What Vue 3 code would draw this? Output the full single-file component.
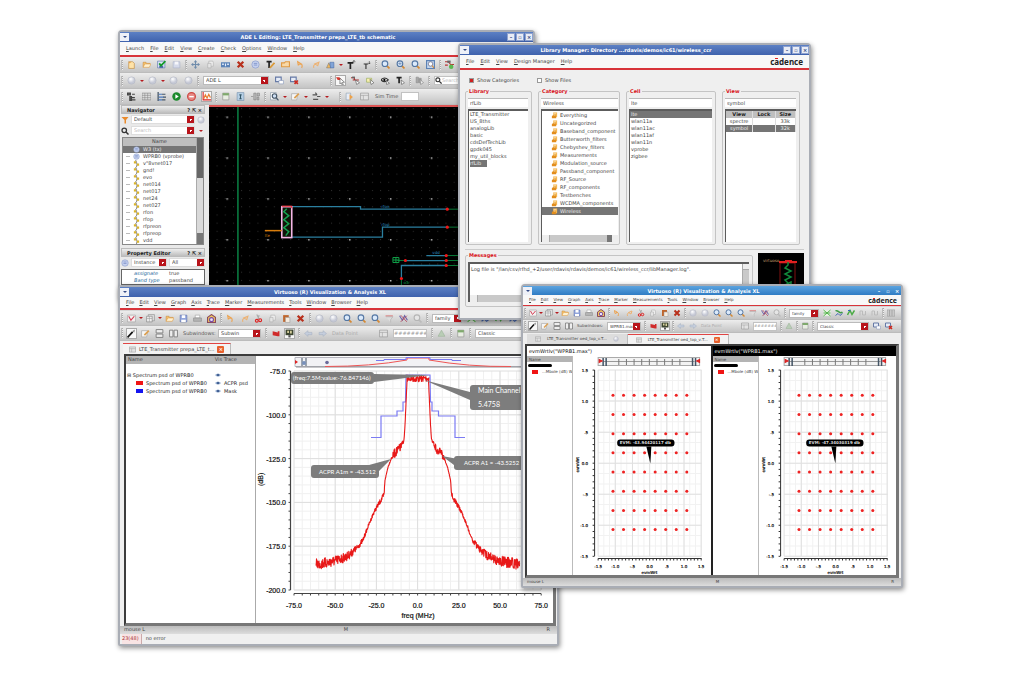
<script setup>
const sel = (value, w, extra = {}) => ({ k: 'select', value, w, ...extra })
const txt = (value, w, dim) => ({ k: 'text', value, w, dim })
const inp = (value, w, label, search) => ({ k: 'input', value, w, label, search })
const gap = (w) => ({ k: 'gap', w })
const icons = (s) => s.split(' ').map((n) => {
  if (n === '|') return { k: 'grip' }
  if (n === 'v') return { k: 'drop' }
  return { k: 'icon', name: n.replace('!', ''), on: n.endsWith('!') }
})

const visMenu = ['File', 'Edit', 'View', 'Graph', 'Axis', 'Trace', 'Marker', 'Measurements', 'Tools', 'Window', 'Browser', 'Help']
const visIcons = '| trace v sheet v open save print snap | undo redo cut copy paste x | ball ball zoom zoom zoom filter tracex zoomg |'

const windows = [
  {
    id: 'schematic',
    title: 'ADE L Editing: LTE_Transmitter prepa_LTE_tb schematic',
    menu: ['Launch', 'File', 'Edit', 'View', 'Create', 'Check', 'Options', 'Window', 'Help'],
    bars: [
      icons('| new open check saveg | move copy stretch x prop tpen label undo redo shape v tbig tsmall | zoom zoomin zoom fit | netplus'),
      [...icons('| ball v ball v ball ball |'), sel('ADE L', 66), ...icons('win winx'), gap(21), ...icons('| cursor! netcur selcur eyecur tcur | grpcur |'), inp('', 60, 'Search', true)],
      [...icons('| tree table align play stop chart! | page info probe | zoomdoc v edit v net v'), gap(2), ...icons('| page2 frame'), txt('Sim Time', 20), inp('', 18, 'Sim time')],
    ],
  },
  {
    id: 'visual',
    title: 'Virtuoso (R) Visualization & Analysis XL',
    menu: visMenu,
    bars: [
      [...icons(visIcons), sel('family', 30), ...icons('wave1 wave2 wave3 wave2')],
      [...icons('| wand! edit split cols'), txt('Subwindows:', 30), sel('Subwin', 43), ...icons('| flag photo! | back fwd'), txt('Data Point', 42, true), ...icons('frame'), inp('##########', 34, 'Data value'), ...icons('| tri | page |'), sel('Classic', 66)],
    ],
  },
  {
    id: 'library',
    title: 'Library Manager: Directory ...rdavis/demos/ic61/wireless_ccr',
    menu: ['File', 'Edit', 'View', 'Design Manager', 'Help'],
    logo: true,
    bars: [],
  },
  {
    id: 'constel',
    title: 'Virtuoso (R) Visualization & Analysis XL',
    menu: visMenu,
    logo: true,
    bars: [
      [...icons(visIcons), sel('family', 30), ...icons('wave1 wave2 wave3 ghost ghost | table')],
      [...icons('| wand! edit split cols'), txt('Subwindows:', 26), sel('WPRB1.max"', 34), ...icons('| flag photo! | back fwd'), txt('Data Point', 36, true), ...icons('frame'), inp('##########', 24, 'Data value'), ...icons('| tri | page |'), sel('Classic', 52), ...icons('win winx')],
    ],
  },
]

const nets = ['W3 (tx)', 'WPRB0 (vprobe)', 'v"8vnet017', 'gnd!', 'evo', 'net014', 'net017', 'net24', 'net027', 'rfon', 'rfop', 'rfpreon', 'rfpreop', 'vdd']
const libs = ['LTE_Transmitter', 'US_8ths', 'analogLib', 'basic', 'cdsDefTechLib', 'gpdk045', 'my_util_blocks', 'rfLib']
const cats = ['Everything', 'Uncategorized', 'Baseband_component', 'Butterworth_filters', 'Chebyshev_filters', 'Measurements', 'Modulation_source', 'Passband_component', 'RF_Source', 'RF_components', 'Testbenches', 'WCDMA_components', 'Wireless']
const cells = ['lte', 'wlan11a', 'wlan11ac', 'wlan11af', 'wlan11n', 'vprobe', 'zigbee']
const traces = [
  { name: 'ACPR psd', color: 'red' },
  { name: 'Mask', color: 'blue' },
]

/* spectrum trace: right half mirrored from the left around 0 MHz */
let seed = 7
const rnd = () => {
  seed = (seed * 16807) % 2147483647
  return seed / 2147483647 - 0.5
}
const half = [
  [316, 564, 11], [326, 563, 11], [338, 560, 10], [348, 556, 9], [357, 548, 6], [363, 540, 5], [369, 524, 3], [374, 512, 4],
  [384, 495, 6], [385, 480, 1], [388, 467, 1], [391, 459, 2], [394, 454, 9], [401, 447, 9], [404, 440, 2], [405, 425, 0], [407, 381, 0],
]
const side = () => {
  const out = []
  for (let i = 0; i < half.length - 1; i++) {
    const [x1, y1, n1] = half[i]
    const [x2, y2, n2] = half[i + 1]
    const steps = Math.max(2, Math.round((x2 - x1) * 4))
    for (let s = 0; s < steps; s++) {
      const t = s / steps
      out.push([x1 + (x2 - x1) * t, y1 + (y2 - y1) * t + rnd() * (n1 + (n2 - n1) * t)])
    }
  }
  out.push([407, 381])
  return out
}
const fmt = (pts) => pts.map(([x, y]) => x.toFixed(1) + ',' + y.toFixed(1)).join(' ')
const top = Array.from({ length: 74 }, (_, i) => [407 + i * 0.3, 378.5 + rnd() * 7])
const right = side().map(([x, y]) => [835.5 - x, y]).reverse()
const spectrum = fmt([...side(), ...top, ...right])
const mask = '371,437.5 381,437.5 381,416 397,416 397,411 403,411 403,402 405.5,402 406,375 430,375 430.5,402 432,402 432,411 438.5,411 438.5,416 455,416 455,437.5 465,437.5'
const dbTicks = [75, 100, 125, 150, 175, 200].map((v, i) => ({ t: '-' + v + '.0', y: 371 + i * 43.8 }))
const mhzTicks = ['-75.0', '-50.0', '-25.0', '0.0', '25.0', '50.0', '75.0'].map((t, i) => ({ t, x: 294 + i * 41.2 }))

const panes = [
  { title: 'evmWrtlv("WPRB1.max")', evm: 'EVM: -43.94420117 db', x: 617, tip: 649 },
  { title: 'evmWrtlv("WPRB1.max")', evm: 'EVM: -47.34030319 db', x: 620, tip: 648, dark: true },
]
const evmY = ['1.5', '1.0', '.5', '0.0', '-.5', '-1.0', '-1.5'].map((t, i) => ({ t, y: 371 + i * 30.9 }))
const evmX = ['-1.5', '-1.0', '-.5', '0.0', '.5', '1.0', '1.5'].map((t, i) => ({ t, x: 598 + i * 17.1 }))
</script>

<template>
  <main class="desk">
    <svg class="defs" aria-hidden="true">
      <defs>
        <radialGradient id="gBall" cx=".4" cy=".3"><stop offset="0" stop-color="#fff" /><stop offset="1" stop-color="#c6c9d6" /></radialGradient>
      </defs>
      <symbol id="new" viewBox="0 0 16 16"><path d="M3 3h7l3 3v9H3z" fill="#ffe3a8" stroke="#b98032" /><path d="M2 1l2 3 3-1-2 3" fill="#f08a24" /></symbol>
      <symbol id="open" viewBox="0 0 16 16"><path d="M2 13V4h5l1 2h6v3" fill="#f7c46c" stroke="#c78a3c" /><path d="M2 13l3-6h11l-3 6z" fill="#fff1d0" stroke="#dd9a44" /></symbol>
      <symbol id="save" viewBox="0 0 16 16"><path d="M2 2h12v12H2z" fill="#93a6dc" stroke="#5a6cac" /><path d="M5 2h6v5H5zM4 10h8v4H4z" fill="#fff" /></symbol>
      <symbol id="check" viewBox="0 0 16 16"><path d="M1 2h13v12H1z" fill="#dbe5f5" stroke="#4a65a5" /><path d="M4 10h7v4H4z" fill="#4a65a5" /><path d="M4 6l3 4 8-8" fill="none" stroke="#149a28" stroke-width="3" /></symbol>
      <symbol id="saveg" viewBox="0 0 16 16"><path d="M2 3h12v11H2z" fill="#d5daea" stroke="#a9b0c6" /><path d="M5 3h6v5H5z" fill="#f6f6fa" /></symbol>
      <symbol id="move" viewBox="0 0 16 16"><path d="M8 0l3 4H9v3h3V5l4 3-4 3V9H9v3h2l-3 4-3-4h2V9H4v2L0 8l4-3v2h3V4H5z" fill="#6f8cab" /></symbol>
      <symbol id="copy" viewBox="0 0 16 16"><path d="M5 2h7l1 2v7H5z" fill="#eee" stroke="#aaa" /><path d="M3 6h6v8H3z" fill="#e4e4e4" stroke="#aaa" /></symbol>
      <symbol id="stretch" viewBox="0 0 16 16"><path d="M0 4h16v9H0z" fill="#5b83b8" /><path d="M2 6h3v3H2zm5 0h2v5H7zm4 0h3v3h-3z" fill="#e4eefb" /></symbol>
      <symbol id="x" viewBox="0 0 16 16"><path d="M3 3l10 10M13 3L3 13" stroke="#b8301c" stroke-width="4" /></symbol>
      <symbol id="prop" viewBox="0 0 16 16"><circle cx="8" cy="8" r="6.500" fill="#c5d0ee" stroke="#7f92c6" /><path d="M5 6h6M5 9h6" stroke="#5872b6" /></symbol>
      <symbol id="tpen" viewBox="0 0 16 16"><path d="M1 3h9M5.500 3v11" stroke="#222" stroke-width="3" /><path d="M7 14l8-9" stroke="#d99a3a" stroke-width="3" /></symbol>
      <symbol id="label" viewBox="0 0 16 16"><path d="M1 5h5l2-2h7v9H1z" fill="#f8d9a8" stroke="#e09a44" stroke-width="2" /></symbol>
      <symbol id="undo" viewBox="0 0 16 16"><path d="M3 3l1 6 5-2zM6 6c5 0 6 4 4 8" fill="none" stroke="#eda24e" stroke-width="2" /></symbol>
      <symbol id="redo" viewBox="0 0 16 16"><path d="M14 4l-2 6-5-3zM9 7c-4 1-5 3-4 7" fill="none" stroke="#ecb273" stroke-width="2" /></symbol>
      <symbol id="shape" viewBox="0 0 16 16"><path d="M1 14l4-9 4 9z" fill="#f3b95d" stroke="#777" /><path d="M7 4h7v10H8z" fill="#80a4d8" stroke="#476ba5" /></symbol>
      <symbol id="tbig" viewBox="0 0 16 16"><path d="M1 5h10M6 5v11" stroke="#222" stroke-width="3" /><path d="M12 6V1m-2 2l2-2 3 2" fill="none" stroke="#222" /></symbol>
      <symbol id="tsmall" viewBox="0 0 16 16"><path d="M3 7h8M7 7v9" stroke="#333" stroke-width="2" /><path d="M13 2v5m-2-2l2 2 2-2" fill="none" stroke="#222" /></symbol>
      <symbol id="zoom" viewBox="0 0 16 16"><path d="M10 10l5 5" stroke="#d58a35" stroke-width="3" /><circle cx="7" cy="6.500" r="5" fill="#dbeafb" stroke="#5577a3" stroke-width="2" /></symbol>
      <symbol id="zoomin" viewBox="0 0 16 16"><path d="M10 10l5 5" stroke="#d58a35" stroke-width="3" /><circle cx="7" cy="6.500" r="5" fill="#dbeafb" stroke="#5577a3" stroke-width="2" /><path d="M4 6.500h6M7 4v5" stroke="#47699b" /></symbol>
      <symbol id="zoomg" viewBox="0 0 16 16"><path d="M10 10l5 5" stroke="#bbb" stroke-width="3" /><circle cx="7" cy="6.500" r="5" fill="#e6e6e6" stroke="#b5b5b5" stroke-width="2" /></symbol>
      <symbol id="fit" viewBox="0 0 16 16"><path d="M1 1h14v14H1z" fill="#c3d6ee" stroke="#5d82b5" stroke-width="2" /><circle cx="8" cy="7" r="4" fill="#fff" stroke="#446" /><path d="M11 10l3 4" stroke="#d58a35" stroke-width="2" /></symbol>
      <symbol id="netplus" viewBox="0 0 16 16"><path d="M0 3h6l4 5h6M0 9h5" fill="none" stroke="#b33" stroke-width="2" /><path d="M4 1h6v4H4z" fill="#666" /><circle cx="11" cy="12" r="4" fill="#5cb951" /></symbol>
      <symbol id="ball" viewBox="0 0 16 16"><circle cx="8" cy="8" r="6.500" fill="url(#gBall)" stroke="#b4b7c2" /></symbol>
      <symbol id="win" viewBox="0 0 16 16"><path d="M1 2h10v8H1z" fill="#e6ecf7" stroke="#667aa6" stroke-width="2" /><path d="M7 8h8v6H7z" fill="#fff" stroke="#8193b8" /></symbol>
      <symbol id="winx" viewBox="0 0 16 16"><path d="M1 2h10v8H1z" fill="#e6ecf7" stroke="#667aa6" stroke-width="2" /><path d="M8 8l6 6m0-6l-6 6" stroke="#cc2a20" stroke-width="3" /></symbol>
      <symbol id="cursor" viewBox="0 0 16 16"><path d="M0 2h6l4 5H3z" fill="#d63a30" /><path d="M7 4l8 7-4 .5 2 4-2 .5-2-4-2 2z" fill="#fff" stroke="#444" /></symbol>
      <symbol id="netcur" viewBox="0 0 16 16"><path d="M0 3h6v4h8M3 7h3" fill="none" stroke="#a33" stroke-width="2" /><path d="M2 1h5v3H2z" fill="#666" /><path d="M8 7l7 5-5 3z" fill="#fff" stroke="#444" /></symbol>
      <symbol id="selcur" viewBox="0 0 16 16"><path d="M1 4h9v7H1z" fill="#f8f0b0" stroke="#8aa34a" /><path d="M7 6l7 6-5 3z" fill="#fff" stroke="#444" /></symbol>
      <symbol id="eyecur" viewBox="0 0 16 16"><path d="M0 7q6-7 13 0-7 6-13 0z" fill="#fff" stroke="#333" stroke-width="2" /><circle cx="6" cy="7" r="2" /><path d="M9 8l6 5-5 2z" fill="#fff" stroke="#444" /></symbol>
      <symbol id="tcur" viewBox="0 0 16 16"><path d="M1 3h9M5.500 3v10" stroke="#222" stroke-width="3" /><path d="M9 7l6 5-5 3z" fill="#fff" stroke="#444" /></symbol>
      <symbol id="grpcur" viewBox="0 0 16 16"><path d="M2 2h4v10H2zm5 2h4v8H7z" fill="#aaa" stroke="#888" /><path d="M9 6l6 6-5 3z" fill="#eee" stroke="#777" /></symbol>
      <symbol id="tree" viewBox="0 0 16 16"><path d="M1 2h5v3H1zm8 2h5M9 10h5M9 14h6M5 8h3v7H5z" fill="#555" stroke="#444" stroke-width="2" /></symbol>
      <symbol id="table" viewBox="0 0 16 16"><path d="M0 2h16v12H0z" fill="#ddd" stroke="#777" /><path d="M0 6h16M0 10h16M5 2v12M10 2v12" stroke="#888" /></symbol>
      <symbol id="align" viewBox="0 0 16 16"><path d="M2 0v16" stroke="#345" stroke-width="2" /><path d="M3 3h6v2H3zm0 5h9v2H3zm0 5h6v2H3z" fill="#4a79bd" /><path d="M9 4h6M11 9h5M9 14h6" stroke="#456" stroke-width="2" /></symbol>
      <symbol id="play" viewBox="0 0 16 16"><circle cx="8" cy="8" r="7.500" fill="#1b8a2c" /><path d="M6 4l6 4-6 4z" fill="#fff" /></symbol>
      <symbol id="stop" viewBox="0 0 16 16"><circle cx="8" cy="8" r="7" fill="#e78984" stroke="#cd4944" stroke-width="2" /><path d="M4 7h8v2.500H4z" fill="#fff" /></symbol>
      <symbol id="chart" viewBox="0 0 16 16"><path d="M2 0v14h14" fill="none" stroke="#d22" stroke-width="2" /><path d="M3 12l3-7 3 6 3-7 3 6" fill="none" stroke="#e87a2c" stroke-width="2" /></symbol>
      <symbol id="page" viewBox="0 0 16 16"><path d="M3 2h11v12H3z" fill="#e8ede2" stroke="#888" /><path d="M3 2h11v4H3z" fill="#7fa96d" /></symbol>
      <symbol id="page2" viewBox="0 0 16 16"><path d="M2 2h8v12H2z" fill="#e7edf8" stroke="#89a" /><path d="M8 4l6 5-6 5z" fill="#eea146" /></symbol>
      <symbol id="info" viewBox="0 0 16 16"><path d="M2 1h12v14H2z" fill="#b7d0e6" stroke="#6c8aa8" /><path d="M6 5h4M8 5v7M6 12h4" stroke="#356" stroke-width="2" /></symbol>
      <symbol id="probe" viewBox="0 0 16 16"><path d="M0 8h4M5 2h4v12H5zM11 2h4v5h-4zM11 9h3v5h-3z" fill="#bbb" stroke="#777" /></symbol>
      <symbol id="zoomdoc" viewBox="0 0 16 16"><path d="M1 1h10v13H1z" fill="#fff" stroke="#789" /><circle cx="8" cy="7" r="4" fill="#cfe0f5" stroke="#456" stroke-width="2" /><path d="M11 10l4 5" stroke="#456" stroke-width="2" /></symbol>
      <symbol id="edit" viewBox="0 0 16 16"><path d="M1 3h11l-2 11H1z" fill="#f6f6f6" stroke="#999" /><path d="M6 11l8-8" stroke="#dca052" stroke-width="3" /></symbol>
      <symbol id="net" viewBox="0 0 16 16"><path d="M1 5h8M6 1l3 4M9 8h6M2 13h9" stroke="#555" stroke-width="2" /></symbol>
      <symbol id="frame" viewBox="0 0 16 16"><path d="M1 2h14v12H1z" fill="#e3e3e3" stroke="#8a8a8a" /><path d="M1 6h14M6 6v8" stroke="#999" /></symbol>
      <symbol id="trace" viewBox="0 0 16 16"><path d="M1 2h14v12H1z" fill="#f5f0f0" stroke="#999" /><path d="M3 4l4 7 6-7" fill="none" stroke="#d33e55" stroke-width="2" /></symbol>
      <symbol id="sheet" viewBox="0 0 16 16"><path d="M4 1h11v11H4z" fill="#ddd" stroke="#888" /><path d="M1 4h10v10H1z" fill="#eee" stroke="#777" /><path d="M1 8h10M6 4v10" stroke="#999" /></symbol>
      <symbol id="print" viewBox="0 0 16 16"><path d="M4 2h8v5H4z" fill="#fff" stroke="#999" /><path d="M1 7h14v6H1z" fill="#b4b4b4" stroke="#888" /></symbol>
      <symbol id="snap" viewBox="0 0 16 16"><path d="M1 6l7-5 7 5v9H1z" fill="#f2ca5a" stroke="#8a4a5c" stroke-width="2" /><circle cx="8" cy="10" r="3.500" fill="#e9e2fb" stroke="#7a4aa5" stroke-width="2" /></symbol>
      <symbol id="cut" viewBox="0 0 16 16"><path d="M5 1l4 8M9 2L7 9" stroke="#aaa" stroke-width="2" /><circle cx="5" cy="12" r="2.500" fill="none" stroke="#d22" stroke-width="2" /><circle cx="11" cy="11" r="2.500" fill="none" stroke="#d22" stroke-width="2" /></symbol>
      <symbol id="paste" viewBox="0 0 16 16"><path d="M2 2h10v12H2z" fill="#c0652b" /><path d="M6 6h8v9H6z" fill="#f6ecdf" stroke="#999" /></symbol>
      <symbol id="filter" viewBox="0 0 16 16"><path d="M1 2h13v3H1z" fill="#d99" /><path d="M2 5h12l-4 5v5" fill="#ddd" stroke="#aaa" /></symbol>
      <symbol id="tracex" viewBox="0 0 16 16"><path d="M1 3l5 8 4-8 5 8" fill="none" stroke="#6b62a8" stroke-width="2" /><path d="M3 2l11 12M14 3L3 14" stroke="#b3485c" stroke-width="1.500" /></symbol>
      <symbol id="wave1" viewBox="0 0 16 16"><path d="M1 2h14v12H1z" fill="#e6f2e2" /><path d="M1 2l14 12M15 2L1 14M1 8h14" stroke="#55b34c" stroke-width="2" /></symbol>
      <symbol id="wave2" viewBox="0 0 16 16"><path d="M1 4c5-4 8 8 14 2" fill="none" stroke="#3f9c46" stroke-width="3" /><path d="M1 13l5-4 4 4 5-4" fill="none" stroke="#4668b5" stroke-width="2" /></symbol>
      <symbol id="wave3" viewBox="0 0 16 16"><path d="M1 12l5-9 4 8 5-8" fill="none" stroke="#4bab45" stroke-width="3" /><path d="M2 3h5" stroke="#36b" stroke-width="2" /></symbol>
      <symbol id="ghost" viewBox="0 0 16 16"><path d="M2 13V4h5v8h6V4" fill="none" stroke="#bbb" stroke-width="2" /></symbol>
      <symbol id="wand" viewBox="0 0 16 16"><path d="M1 15L10 5" stroke="#111" stroke-width="3" /><path d="M9 4l5-3-1 5z" fill="#888" /></symbol>
      <symbol id="split" viewBox="0 0 16 16"><path d="M2 1h12v6H2zM2 9h12v6H2z" fill="#eee" stroke="#777" stroke-width="1.500" /></symbol>
      <symbol id="cols" viewBox="0 0 16 16"><path d="M1 2h6v12H1zM9 2h6v12H9z" fill="#eee" stroke="#777" stroke-width="1.500" /></symbol>
      <symbol id="flag" viewBox="0 0 16 16"><path d="M3 4l9 2V4h3v9h-3l-9-2z" fill="#d02a2a" /></symbol>
      <symbol id="photo" viewBox="0 0 16 16"><path d="M1 1h14v10H1z" fill="#3d4630" /><path d="M4 3h3v4H4zm5 0h3v5H9z" fill="#ddd6a2" /><path d="M6 11h4v4H6z" fill="#555" /></symbol>
      <symbol id="back" viewBox="0 0 16 16"><path d="M1 8l6-5v3h7v4H7v3z" fill="#c5cedd" stroke="#a5b0c2" /></symbol>
      <symbol id="fwd" viewBox="0 0 16 16"><path d="M15 8L9 3v3H2v4h7v3z" fill="#c5cedd" stroke="#a5b0c2" /></symbol>
      <symbol id="tri" viewBox="0 0 16 16"><path d="M8 2l6 11H2z" fill="#b9cdb6" stroke="#9ab096" /></symbol>
      <symbol id="lens" viewBox="0 0 16 16"><circle cx="6.500" cy="6.500" r="4.500" fill="none" stroke="#333" stroke-width="2.500" /><path d="M10 10l5 5" stroke="#333" stroke-width="3" /></symbol>
      <symbol id="wire" viewBox="0 0 16 16"><path d="M6 0l2 5 1 5-1 6" fill="none" stroke="#777" stroke-width="2" /><path d="M2 3h5v5H2zm7 5h5v5H9z" fill="#d9b32a" /></symbol>
      <symbol id="funnel" viewBox="0 0 16 16"><path d="M1 2h14l-5 6v7H7V8z" fill="#e98a2b" /></symbol>
      <symbol id="folder" viewBox="0 0 16 16"><path d="M5 1h9v11H5z" fill="#f4b650" /><path d="M2 9l8-5 2 10H2z" fill="#e28d1c" /><path d="M6 4h6M6 7h4" stroke="#fff3d0" stroke-width="1.500" /></symbol>
      <symbol id="eye" viewBox="0 0 16 16"><path d="M0 8q8-8 16 0-8 8-16 0z" fill="#8ca5c9" /><circle cx="8" cy="8" r="3" fill="#38568c" /></symbol>
    </svg>

    <section v-for="w in windows" :key="w.id" class="win" :class="w.id">
      <header class="title">
        <button class="sys" aria-label="Window menu"><span class="caret"></span></button>
        <h2>{{ w.title }}</h2>
        <div class="wb">
          <button aria-label="Minimize">–</button><button aria-label="Maximize">▫</button><button aria-label="Close">×</button>
        </div>
      </header>
      <nav class="menu">
        <button v-for="m in w.menu" :key="m">{{ m }}</button>
        <span v-if="w.logo" class="logo">c<i>a</i>dence</span>
      </nav>

      <div v-if="w.bars.length" class="bars">
        <div v-for="(bar, b) in w.bars" :key="b" class="bar">
          <template v-for="(it, n) in bar" :key="n">
            <span v-if="it.k === 'grip'" class="grip"></span>
            <span v-else-if="it.k === 'drop'" class="drop"></span>
            <button v-else-if="it.k === 'icon'" class="ic" :class="{ on: it.on }" :aria-label="it.name"><svg><use :href="'#' + it.name" /></svg></button>
            <span v-else-if="it.k === 'text'" class="lbl" :class="{ dim: it.dim }" :style="{ width: it.w + 'px' }">{{ it.value }}</span>
            <span v-else-if="it.k === 'gap'" :style="{ width: it.w + 'px' }"></span>
            <span v-else-if="it.k === 'select'" class="combo" :style="{ width: it.w + 'px' }"><select :aria-label="it.value"><option>{{ it.value }}</option></select></span>
            <span v-else class="field" :style="{ width: it.w + 'px' }"><svg v-if="it.search"><use href="#lens" /></svg><input :aria-label="it.label" :value="it.value" :placeholder="it.search ? 'Search' : ''"></span>
          </template>
        </div>
      </div>

      <div v-if="w.id === 'schematic'" class="work">
        <aside class="dock">
          <h3>Navigator <span>? ⇱ ×</span></h3>
          <div class="row"><svg><use href="#funnel" /></svg><span class="combo"><select aria-label="Filter"><option>Default</option></select></span><svg><use href="#ball" /></svg></div>
          <div class="row"><svg><use href="#lens" /></svg><span class="combo"><input aria-label="Search nets" placeholder="Search"></span><span class="drop"></span></div>
          <div class="nets">
            <div class="netcol">
              <h4>Name</h4>
              <ul>
                <li v-for="(n, i) in nets" :key="n" :class="{ picked: i === 0 }"><svg><use :href="i < 2 ? '#prop' : '#wire'" /></svg>{{ n }}</li>
              </ul>
            </div>
            <span class="vbar"></span>
          </div>
          <h3>Property Editor <span>? ⇱ ×</span></h3>
          <div class="row"><svg><use href="#prop" /></svg><span class="combo"><select aria-label="Object"><option>Instance</option></select></span><span class="combo"><select aria-label="Scope"><option>All</option></select></span></div>
          <dl class="props"><dt>assignate</dt><dd>true</dd><dt>Band type</dt><dd>passband</dd></dl>
        </aside>
        <svg class="canvas" viewBox="209 107 325 193" preserveAspectRatio="xMinYMin slice">
          <defs>
            <pattern id="minor" x="3.400" y="1.600" width="8.200" height="8.200" patternUnits="userSpaceOnUse"><rect width="1" height="1" fill="#303030" /></pattern>
            <pattern id="major" x="226.500" y="116.500" width="41" height="41" patternUnits="userSpaceOnUse"><rect width="1.500" height="1.500" fill="#c0c0c0" /></pattern>
          </defs>
          <path d="M209 107h325v193H209z" />
          <path d="M209 107h325v193H209z" fill="url(#minor)" />
          <path d="M209 107h325v193H209z" fill="url(#major)" />
          <path d="M238 107v193" stroke="#0a7a41" stroke-width="1.600" />
          <g fill="none" stroke="#2b7f9f" stroke-width="1.300">
            <path d="M292 207h69v2.500h87M292 237.500h91v-10h65M427 256h20M406 261h41M402 279v-13h45" />
          </g>
          <path d="M448 209.500h12M448 227.500h12M447 256h12M447 261h12M447 266h12M398 261h8M402 280v14" stroke="#087a38" />
          <rect x="282" y="207" width="10" height="31" fill="#101408" stroke="#f4b6e6" stroke-width="1.600" />
          <path d="M287 209l-3 3 5 4-5 4 5 4-5 4 5 4-3 4" fill="none" stroke="#16a050" stroke-width="1.500" />
          <path d="M282 206.500h10v2" fill="none" stroke="#e22" />
          <path d="M265 231h17" stroke="#d97d0c" stroke-width="1.500" />
          <path d="M393.500 258h6v5h-6zM393.500 260.500h6M396.500 258v5" fill="none" stroke="#10a048" />
          <g fill="#f01818"><circle v-for="p in [[448, 209.5], [448, 227.5], [447, 256], [447, 261], [447, 266], [406, 261], [402, 279]]" :key="p" :cx="p[0]" :cy="p[1]" r="1.600" /></g>
          <g font-size="4" font-family="DejaVu Sans" fill="#2b8fc4"><text x="382" y="208">rfon</text><text x="382" y="226">rfop</text><text x="433" y="254">vdd</text></g>
          <text x="265" y="237" font-size="4" font-family="DejaVu Sans" fill="#d97d0c">lte</text>
          <text x="404" y="285" font-size="4" font-family="DejaVu Sans" fill="#12a048">o3r</text>
        </svg>
      </div>

      <div v-else-if="w.id === 'visual'" class="plotwrap">
        <div class="tabs"><button class="tab on"><svg><use href="#frame" /></svg>LTE_Transmitter prepa_LTE_t...<b>×</b></button></div>
        <div class="frame">
          <div class="tree">
            <div class="th"><span>Name</span><span>Vis Trace</span></div>
            <ul>
              <li class="root"><span>⊟ Spectrum psd of WPRB0</span><svg><use href="#eye" /></svg></li>
              <li v-for="t in traces" :key="t.name"><i :class="t.color"></i><span>Spectrum psd of WPRB0</span><svg><use href="#eye" /></svg><em>{{ t.name }}</em></li>
            </ul>
          </div>
          <svg class="chart" viewBox="256 356 297 266" preserveAspectRatio="xMinYMin meet">
            <path d="M256 356h297v268H256z" fill="#fff" />
            <path d="M295 357.500h258v9H295z" fill="#f2f2f5" stroke="#b5b5bd" />
            <path d="M296 367h257" stroke="#8f9095" />
            <path d="M295 360l3 2-3 2z" fill="#d22" />
            <path d="M302 358v8M306 358v8" stroke="#456" /><circle cx="304" cy="363" r="2" fill="#7890ba" />
            <circle cx="327" cy="362.500" r="1.800" fill="#6a6a9a" />
            <path d="M325 366.500q46 0 82-6.500v-2h22v2q40 7 82 6.500" fill="none" stroke="#ee5555" />
            <path d="M376 360.500h8v-1h22v-2h24v2h22v1h9" fill="none" stroke="#7a7af0" />
            <g stroke="#f0f0f0"><path v-for="i in 30" :key="i" :d="`M${294 + i * 8.24} 371v219`" /><path v-for="i in 25" :key="'h' + i" :d="`M294 ${371 + i * 8.76}h247`" /></g>
            <g stroke="#dedede"><path v-for="t in mhzTicks" :key="t.t" :d="`M${t.x} 371v219`" /><path v-for="t in dbTicks" :key="t.t" :d="`M294 ${t.y}h247`" /></g>
            <path d="M290.500 371v219M294 593.500h247" stroke="#444" stroke-width="1.200" />
            <g stroke="#444"><path v-for="i in 26" :key="i" :d="`M288.500 ${362.24 + i * 8.76}h2`" /><path v-for="i in 31" :key="'x' + i" :d="`M${285.76 + i * 8.24} 593.500v2`" /></g>
            <g class="axis"><text v-for="t in dbTicks" :key="t.t" x="286" :y="t.y + 3" text-anchor="end">{{ t.t }}</text><text v-for="t in mhzTicks" :key="t.t" :x="t.x" y="608" text-anchor="middle">{{ t.t }}</text>
              <text x="418" y="618" text-anchor="middle">freq (MHz)</text><text transform="translate(263 486) rotate(-90)">(dB)</text></g>
            <polyline :points="mask" fill="none" stroke="#7b7bf3" stroke-width="1.200" />
            <polyline :points="spectrum" fill="none" stroke="#e81818" stroke-width="1.100" stroke-linejoin="round" />
            <g fill="#7d7d7d">
              <path d="M374 374l56 1-56 7zM424 380l46 12v8zM391 459l-22 6 10 6zM442 456l16 3-4 6z" />
              <rect x="291" y="372" width="83" height="12" rx="3" /><rect x="470" y="385" width="90" height="25" rx="3" />
              <rect x="311" y="465" width="68" height="13" rx="3" /><rect x="454" y="456" width="90" height="14" rx="3" />
            </g>
            <g class="mark"><text x="293" y="380">(freq:7.5M:value:-76.847146)</text><text class="main" x="478" y="393">Main Channel P</text><text class="main" x="478" y="407">5.4758</text><text x="319" y="474">ACPR A1m = -43.512</text><text x="464" y="465">ACPR A1 = -43.5252</text></g>
          </svg>
        </div>
        <footer class="status"><span>mouse L</span><span>M</span><span>R</span></footer>
        <footer class="status two"><span class="num">23(48)</span><span>no error</span></footer>
      </div>

      <form v-else-if="w.id === 'library'" class="lib">
        <div class="checks"><label><input type="checkbox" checked>Show Categories</label><label><input type="checkbox">Show Files</label></div>
        <div class="cols">
          <fieldset class="c1"><legend>Library</legend><input value="rfLib" aria-label="Library">
            <ul class="list"><li v-for="l in libs" :key="l"><span :class="{ picked: l === 'rfLib' }">{{ l }}</span></li></ul>
          </fieldset>
          <fieldset class="c2"><legend>Category</legend><input value="Wireless" aria-label="Category">
            <div class="list"><ul><li v-for="c in cats" :key="c" :class="{ picked: c === 'Wireless' }"><svg><use href="#folder" /></svg>{{ c }}</li></ul><span class="hbar"></span></div>
          </fieldset>
          <fieldset class="c3"><legend>Cell</legend><input value="lte" aria-label="Cell">
            <ul class="list"><li v-for="c in cells" :key="c" :class="{ picked: c === 'lte' }">{{ c }}</li></ul>
          </fieldset>
          <fieldset class="c4"><legend>View</legend><input value="symbol" aria-label="View">
            <div class="list">
              <table>
                <thead><tr><th>View</th><th>Lock</th><th>Size</th></tr></thead>
                <tbody><tr><td>spectre</td><td></td><td>33k</td></tr><tr class="picked"><td>symbol</td><td></td><td>32k</td></tr></tbody>
              </table>
            </div>
          </fieldset>
        </div>
        <div class="bottom">
          <fieldset class="msg"><legend>Messages</legend>
            <div class="log"><div class="logtext"><p>Log file is "/lan/csv/rfhd_+2/user/rdavis/rdavis/demos/ic61/wireless_ccr/libManager.log".</p><span class="vbar"></span></div><span class="hbar"></span></div>
          </fieldset>
          <svg class="thumb" viewBox="0 0 46 50"><path d="M0 0h46v50H0z" /><path d="M22 10h15v40H22z" fill="none" stroke="#801010" /><path d="M21 9h18M27 8h7" stroke="#e02020" stroke-width="2" /><path d="M30 9v3l-3 3 6 3-6 3 6 3-6 3 3 3M27 32l6-3v5z" fill="none" stroke="#128a3c" stroke-width="1.500" /><text x="5" y="9" font-size="4" font-family="DejaVu Sans" fill="#d0a070">virtuoso</text></svg>
        </div>
      </form>

      <div v-else class="plotwrap">
        <div class="tabs">
          <button class="tab"><svg><use href="#frame" /></svg>LTE_Transmitter oed_top_v.T...<svg><use href="#ball" /></svg></button>
          <button class="tab on"><svg><use href="#frame" /></svg>LTE_Transmitter oed_top_v.T...<b>×</b></button>
        </div>
        <div class="panes">
          <div v-for="(p, k) in panes" :key="k" class="pane" :class="{ dark: p.dark }">
            <h3>{{ p.title }}</h3>
            <div class="inner">
              <div class="tree"><div class="th"><span>Name</span></div><span class="blob"></span><p><i class="red"></i>...Mbole (dB) W</p></div>
              <svg class="chart" viewBox="573 357 136 218" preserveAspectRatio="xMinYMin meet">
                <path d="M573 357h138v221H573z" fill="#fff" />
                <path d="M598 358.500h101v8H598z" fill="#f3f3f3" stroke="#aaa" />
                <path d="M603 362.500h91" stroke="#999" />
                <path d="M603 359v8M606 359v8M692 359v8M695 359v8" stroke="#456" stroke-width="1.500" />
                <path v-for="i in 9" :key="i" :d="`M${611 + i * 7.6} 360v6`" stroke="#777" />
                <path d="M599 360.500l3 1.500-3 1.500zM699 360.500l-3 1.500 3 1.500z" fill="#d22" stroke="#d22" />
                <g stroke="#f2f2f2"><path v-for="i in 18" :key="i" :d="`M${598 + i * 5.7} 371v185`" /><path v-for="i in 18" :key="'h' + i" :d="`M598 ${371 + i * 10.3}h103`" /></g>
                <g stroke="#e0e0e0"><path v-for="t in evmX" :key="t.t" :d="`M${t.x} 371v185`" /><path v-for="t in evmY" :key="t.t" :d="`M598 ${t.y}h103`" /></g>
                <path d="M594.500 371v185M598 558.500h103" stroke="#333" />
                <g stroke="#333"><path v-for="i in 31" :key="i" :d="`M592.500 ${364.82 + i * 6.18}h2`" /><path v-for="i in 31" :key="'x' + i" :d="`M${594.58 + i * 3.42} 558.500v2`" /></g>
                <g class="axis"><text v-for="t in evmY" :key="t.t" x="588" :y="t.y + 2" text-anchor="end">{{ t.t }}</text><text v-for="t in evmX" :key="t.t" :x="t.x" y="568" text-anchor="middle">{{ t.t }}</text>
                  <text x="649" y="574" text-anchor="middle">evmWrt</text><text transform="translate(579 473) rotate(-90)">evmWrt</text></g>
                <g fill="#ee2222"><template v-for="r in 8" :key="r"><circle v-for="c in 8" :key="c" :cx="602.3 + c * 10.5" :cy="377 + r * 19.1" r="1.500" /></template></g>
                <path :d="`M${p.tip - 3} 447h5l-1 17z`" />
                <rect :x="p.x" y="440" width="57" height="7" rx="3" />
                <text class="evm" :x="p.x + 28" y="445" text-anchor="middle">{{ p.evm }}</text>
              </svg>
            </div>
          </div>
        </div>
        <footer class="status"><span>mouse L</span><span>M</span><span>R</span></footer>
      </div>
    </section>
  </main>
</template>

<style scoped>
.desk { position: relative; min-height: 682px; overflow: hidden; background: #fff; font-family: "DejaVu Sans", Verdana, sans-serif; font-size: 5px; line-height: 7px; color: #444; }
.desk *, .desk *::before, .desk *::after { box-sizing: border-box; }
.defs { position: absolute; width: 0; height: 0; }
button, input, select { font: inherit; color: inherit; border: 0; padding: 0; margin: 0; background: none; appearance: none; border-radius: 0; min-width: 0; }
ul { list-style: none; margin: 0; padding: 0; }
h2, h3, h4, p, dl, dd { margin: 0; font-size: inherit; }
svg { display: block; flex: none; }

.win { position: absolute; display: flex; flex-direction: column; background: #efefef; border: 2px solid #a9adb5; border-radius: 4px 4px 2px 2px; box-shadow: 1px 2px 5px rgba(0, 0, 0, .45); --i: 9px; --g: 6px; --hm: -2px; --pad: 3px; }
.schematic { left: 118px; top: 30px; width: 417px; height: 270px; }
.visual { left: 118px; top: 285px; width: 441px; height: 361px; --g: 5px; --hm: -1px; --pad: 2px; }
.library { left: 458px; top: 43px; width: 353px; height: 277px; }
.constel { left: 521px; top: 284px; width: 382px; height: 304px; font-size: 4px; line-height: 6px; --i: 8px; --g: 4px; --hm: -1px; --pad: 2px; }

.title { display: flex; align-items: center; flex: none; height: 10px; background: linear-gradient(#5c80c4, #3f62ad); color: #fff; font-size: 5px; }
.constel .title { height: 9px; background: linear-gradient(#5ba3df, #2f7cc4); }
.title h2 { flex: 1; text-align: center; font-weight: 700; white-space: nowrap; }
.sys { width: 9px; height: 8px; background: #eef1f8; display: grid; place-items: center; }
.caret { border: 2px solid transparent; border-top-color: #334a86; border-bottom: 0; }
.wb { display: flex; gap: 1px; }
.wb button { width: 8px; height: 8px; background: #e8ecf6; color: #223a78; font-weight: 700; text-align: center; border: 1px solid #8ea2cf; line-height: 6px; }
.constel .wb button { background: none; color: #fff; border: 0; }
.menu { display: flex; align-items: center; gap: 6px; flex: none; height: 15px; padding: 0 6px; background: #f8f8f8; border-bottom: 2px solid #d8343a; }
.visual .menu { height: 13px; gap: 5px; }
.constel .menu { height: 11px; gap: 5px; border-bottom-width: 1px; }
.menu button::first-letter { text-decoration: underline; }
.logo { margin-left: auto; font: 700 8px/9px "Noto Sans", sans-serif; color: #222; }
.constel .logo { font-size: 7px; margin-right: -2px; }
.logo i { position: relative; font-style: normal; }
.logo i::before { content: ""; position: absolute; left: 1px; right: 1px; top: 2px; height: 1px; background: #d22; }

.bars { flex: none; background: #d6d6d6; }
.bar { display: flex; align-items: center; gap: var(--g); height: 16px; padding-left: var(--pad); overflow: hidden; background: linear-gradient(#ededed, #c4c4c4); border-bottom: 1px solid #bcbcbc; white-space: nowrap; }
.bar > * { flex: none; }
.visual .bar { height: 15px; }
.constel .bar { height: 13px; }
.grip { width: 2px; height: 10px; margin: 0 var(--hm); background: repeating-linear-gradient(#aaa 0 1px, #eee 1px 2px); border-left: 1px solid #bbb; }
.drop { width: 4px; margin: 0 -2px; border: 2px solid transparent; border-top-color: #b51a1f; border-bottom: 0; }
.ic { width: var(--i); height: var(--i); display: block; }
.ic svg { width: 100%; height: 100%; }
.ic.on { background: #f8f8f8; outline: 1px solid #aaa; }
.lbl { color: #555; }
.lbl.dim { color: #aaa; }
.combo { position: relative; display: flex; height: 9px; background: #fff; border: 1px solid #bbb; }
.combo select, .combo input { width: 100%; padding-left: 2px; line-height: 7px; }
.combo::after { content: ""; width: 7px; flex: none; background: radial-gradient(circle at 50% 50%, #fff 0 1px, #b8141b 1px); }
.field { display: flex; align-items: center; height: 9px; background: #fff; border: 1px solid #c2c2c2; }
.field svg { width: 7px; height: 7px; }
.field input { width: 100%; color: #999; }
::placeholder { color: #bbb; opacity: 1; }
.visual .bars, .constel .bars { padding-top: 1px; }

.work { display: flex; flex: 1; min-height: 0; }
.dock { width: 89px; flex: none; padding: 0 4px 0 1px; background: #e9e9e9; }
.dock h3 { display: flex; justify-content: space-between; height: 9px; padding: 0 2px 0 5px; line-height: 8px; background: linear-gradient(#eee, #bdbdbd); border: 1px solid #bbb; color: #222; }
.dock .row { display: flex; align-items: center; gap: 2px; height: 11px; }
.dock .row svg { width: 8px; height: 8px; }
.dock .row .combo { flex: 1; border-color: #ddd; }
.dock .row .drop { margin: 0 2px; }
.nets { display: flex; height: 108px; margin: 1px 1px 3px; background: #fff; border: 1px solid #888; }
.netcol { flex: 1; display: flex; flex-direction: column; }
.nets h4 { height: 8px; line-height: 7px; text-align: center; background: #bebebe; font-weight: 400; }
.nets ul { flex: 1; display: grid; overflow: hidden; }
.nets li { display: flex; align-items: center; gap: 3px; padding-left: 10px; white-space: nowrap; background: linear-gradient(#bbb, #bbb) 3px 50% / 4px 1px no-repeat; }
.nets li svg { width: 7px; height: 7px; }
.picked { background: #757575 !important; color: #eee; }
.vbar { width: 7px; background: linear-gradient(#666 0 38%, #d9d9d9 38% 90%, #777 90%); border-left: 1px solid #aaa; }
.props { display: grid; grid-template-columns: 1fr 1fr; padding-left: 12px; margin-top: 1px; background: #fff; border: 1px solid #666; }
.props dt { font-style: italic; color: #2a6b9c; }
.canvas { flex: 1; width: 0; height: 100%; border-top: 2px solid #dd5555; background: #000; }

.plotwrap { display: flex; flex-direction: column; flex: 1; min-height: 0; }
.tabs { display: flex; flex: none; height: 13px; padding: 2px 3px 0; background: #eee; }
.tab { display: flex; align-items: center; gap: 3px; padding: 0 6px; background: #ddd; border-right: 1px solid #bbb; white-space: nowrap; }
.tab svg { width: 7px; height: 7px; }
.tab.on { background: #f3f3f3; border-top: 1px solid #e04444; }
.tab b { width: 7px; height: 7px; line-height: 6px; background: #e8602c; color: #fff; border-radius: 1px; text-align: center; }
.constel .tabs { height: 11px; padding: 1px 4px 0; }
.constel .tab { gap: 6px; padding: 0 8px; }
.constel .tab svg, .constel .tab b { width: 6px; height: 6px; }
.frame { display: flex; flex: 1; min-height: 0; margin: 0 1px 0 4px; background: #fff; border: 2px solid #3c3c3c; border-right: 3px solid #777; border-bottom: 3px solid #777; }
.frame .tree { width: 130px; flex: none; border-right: 1px solid #aaa; }
.frame .chart { flex: 1; min-width: 0; height: 100%; }
.th { display: flex; height: 8px; padding: 0 2px; background: #b4b4b4; line-height: 7px; }
.frame .th span + span { margin-left: 72px; }
.frame .tree ul { padding-top: 7px; color: #222; }
.frame .tree li { display: flex; align-items: center; height: 8px; padding-left: 10px; white-space: nowrap; }
.frame .tree li.root { padding-left: 1px; }
.frame .tree li i { width: 7px; height: 4px; margin-right: 3px; }
.frame .tree li span { width: 69px; }
.frame .tree li.root span { width: 88px; }
.frame .tree li svg { width: 6px; height: 6px; }
.frame .tree em { font-style: normal; margin-left: 3px; }
.red { background: #f01414; }
.blue { background: #1414f0; }
.axis { font-family: "Liberation Sans", Arial, sans-serif; font-size: 7px; fill: #111; stroke: #111; stroke-width: .2; }
.mark { font-family: Lato, "Liberation Sans", sans-serif; font-size: 6px; fill: #fff; }
.mark .main { font-size: 7px; }
.constel .axis { font-family: "DejaVu Sans", sans-serif; font-size: 4px; }
.evm { font-size: 4px; fill: #ddd; font-weight: 700; }
.status { display: flex; justify-content: space-between; flex: none; height: 8px; padding: 0 7px 0 4px; line-height: 7px; background: linear-gradient(#bbb, #ddd); }
.status.two { justify-content: flex-start; gap: 4px; height: 10px; padding-left: 2px; line-height: 9px; background: #f0f0f0; }
.num { color: #a33; border-right: 1px solid #caa; background: #f8e4e4; padding-right: 2px; }

.panes { display: flex; flex: 1; min-height: 0; margin: 0 2px; border: 2px solid #3c3c3c; border-right: 3px solid #777; border-bottom: 3px solid #777; background: #fff; }
.pane { flex: 1; min-width: 0; display: flex; flex-direction: column; }
.pane.dark { border-left: 2px solid #222; }
.pane h3 { flex: none; height: 10px; padding-left: 2px; line-height: 10px; font-size: 5px; font-weight: 400; background: #fff; color: #111; }
.pane.dark h3 { background: #000; color: #eee; }
.inner { display: flex; flex: 1; min-height: 0; }
.inner .tree { width: 46px; flex: none; border-right: 1px solid #bbb; white-space: nowrap; }
.inner .th { height: 6px; }
.inner .chart { flex: 1; width: 0; }
.blob { display: block; width: 24px; height: 3px; margin: 2px 1px; border-radius: 2px; background: #000; }
.inner p { display: flex; align-items: center; gap: 4px; padding-left: 5px; overflow: hidden; margin-top: 2px; }
.inner p i { width: 6px; height: 4px; flex: none; }

.lib { display: flex; flex-direction: column; flex: 1; min-height: 0; background: #efefef; }
.checks { display: flex; gap: 18px; padding: 7px 9px 1px; }
.checks label { display: flex; align-items: center; gap: 3px; }
.checks input { width: 5px; height: 5px; background: #fff; border: 1px solid #999; }
.checks input:checked { background: #cf2020; }
.cols { display: grid; grid-template-columns: 67px 82px 90px 78px; gap: 6px; padding: 3px 5px 0; }
fieldset { min-width: 0; margin: 0; padding: 3px 3px 2px 2px; border: 1px solid #c4c4c4; border-radius: 2px; }
legend { padding: 0 1px; color: #d8141c; font-weight: 700; }
.cols fieldset > input { width: 100%; height: 9px; background: #fff; border-top: 1px solid #bbb; padding-left: 2px; display: block; margin-bottom: 2px; }
.list { height: 133px; background: #fff; border: solid #5c5c5c; border-width: 2px 0 0 1px; overflow: hidden; white-space: nowrap; }
.list li { height: 7px; padding-left: 1px; }
.c1 .picked { padding-right: 6px; display: inline-block; }
.cols .c2 { padding-right: 1px; }
.c2 .list { display: flex; flex-direction: column; justify-content: space-between; }
.c2 .list li { display: flex; align-items: center; gap: 2px; height: 8px; padding-left: 9px; }
.c2 .list svg { width: 7px; height: 7px; }
.hbar { display: block; height: 7px; background: linear-gradient(90deg, #eee 0 7px, #aaa 7px 8px, #c9c9c9 8px 85%, #777 85% 92%, #eee 92%); }
.c4 table { width: 100%; border-collapse: collapse; font-size: 5px; line-height: 7px; }
.c4 th { background: #bfbfbf; padding: 0 1px; color: #222; border-right: 1px solid #ddd; }
.c4 td { padding: 0; text-align: center; border-right: 1px solid #ddd; }
.bottom { display: flex; gap: 5px; margin: 4px 5px 0; padding: 2px 0 0; border-top: 1px solid #ccc; }
.msg { flex: 1; padding-bottom: 4px; }
.log { height: 40px; display: flex; flex-direction: column; background: #fff; border: solid #5c5c5c; border-width: 2px 0 0 2px; white-space: nowrap; }
.logtext { display: flex; justify-content: space-between; flex: 1; }
.log p { padding: 2px 0 0 1px; }
.log .vbar { background: linear-gradient(#eee 0 5px, #aaa 5px 6px, #c9c9c9 6px); }
.thumb { width: 46px; height: 50px; margin-top: 1px; }
</style>

<style>
body { background: #fff; }
</style>
